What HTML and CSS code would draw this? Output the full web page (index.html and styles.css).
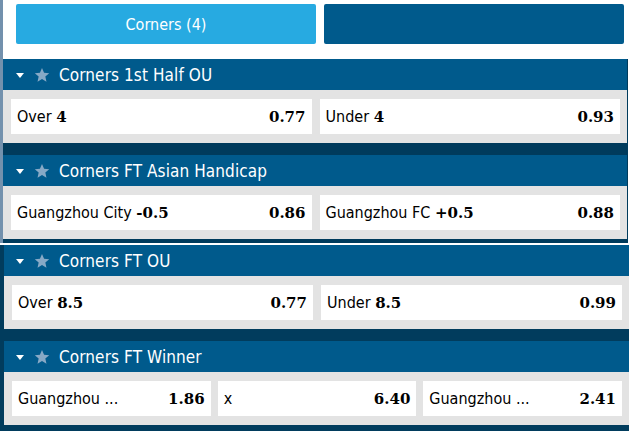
FILE: index.html
```html
<!DOCTYPE html>
<html>
<head>
<meta charset="utf-8">
<link rel="stylesheet" href="styles.css">
</head>
<body>
<div class="top">
  <div class="tabs">
    <div class="tab active">Corners (4)</div>
    <div class="tab"></div>
  </div>
  <div class="group g1">
    <div class="section">
      <div class="head"><span class="caret"></span><svg class="star" viewBox="0 0 24 24"><path d="M12 1.5l3.1 7.1 7.7.7-5.8 5.1 1.7 7.6L12 18l-6.7 4 1.7-7.6-5.8-5.1 7.7-.7z"/></svg><span class="title">Corners 1st Half OU</span></div>
      <div class="body cols2">
        <div class="opt"><span class="lbl">Over <b>4</b></span><b class="odd">0.77</b></div>
        <div class="opt"><span class="lbl">Under <b>4</b></span><b class="odd">0.93</b></div>
      </div>
    </div>
    <div class="section">
      <div class="head"><span class="caret"></span><svg class="star" viewBox="0 0 24 24"><path d="M12 1.5l3.1 7.1 7.7.7-5.8 5.1 1.7 7.6L12 18l-6.7 4 1.7-7.6-5.8-5.1 7.7-.7z"/></svg><span class="title">Corners FT Asian Handicap</span></div>
      <div class="body cols2">
        <div class="opt"><span class="lbl">Guangzhou City <b>-0.5</b></span><b class="odd">0.86</b></div>
        <div class="opt"><span class="lbl">Guangzhou FC <b>+0.5</b></span><b class="odd">0.88</b></div>
      </div>
    </div>
  </div>
</div>
<div class="group g2">
  <div class="section">
    <div class="head"><span class="caret"></span><svg class="star" viewBox="0 0 24 24"><path d="M12 1.5l3.1 7.1 7.7.7-5.8 5.1 1.7 7.6L12 18l-6.7 4 1.7-7.6-5.8-5.1 7.7-.7z"/></svg><span class="title">Corners FT OU</span></div>
    <div class="body cols2">
      <div class="opt"><span class="lbl">Over <b>8.5</b></span><b class="odd">0.77</b></div>
      <div class="opt"><span class="lbl">Under <b>8.5</b></span><b class="odd">0.99</b></div>
    </div>
  </div>
  <div class="section">
    <div class="head"><span class="caret"></span><svg class="star" viewBox="0 0 24 24"><path d="M12 1.5l3.1 7.1 7.7.7-5.8 5.1 1.7 7.6L12 18l-6.7 4 1.7-7.6-5.8-5.1 7.7-.7z"/></svg><span class="title">Corners FT Winner</span></div>
    <div class="body cols3">
      <div class="opt"><span class="lbl">Guangzhou ...</span><b class="odd">1.86</b></div>
      <div class="opt"><span class="lbl">x</span><b class="odd">6.40</b></div>
      <div class="opt"><span class="lbl">Guangzhou ...</span><b class="odd">2.41</b></div>
    </div>
  </div>
</div>
</body>
</html>
```
FILE: styles.css
```css
html, body {
  margin: 0;
  padding: 0;
  background: #ffffff;
  width: 629px;
  height: 431px;
  overflow: hidden;
  font-family: "DejaVu Sans Condensed", "DejaVu Sans", sans-serif;
  font-stretch: condensed;
}
.top {
  border-left: 3px solid #7391ad;
}
.tabs {
  display: flex;
  gap: 8px;
  padding: 4px 5px 15px 13px;
}
.tab {
  flex: 1;
  height: 40px;
  border-radius: 2px;
  background: #005a8c;
  color: #ffffff;
  font-size: 16px;
  display: flex;
  align-items: center;
  justify-content: center;
}
.tab.active {
  background: #27aae1;
}
.group {
  background: #003b5c;
  display: flex;
  flex-direction: column;
  gap: 12px;
}
.g1 {
  border-right: 1px solid #003b5c;
  margin-right: 1px;
  padding-bottom: 4px;
}
.g2 {
  margin-top: 2px;
  padding-left: 4px;
  background: #013c5d;
  height: 186px;
}
.section {
  display: flex;
  flex-direction: column;
}
.head {
  height: 31px;
  background: #005a8c;
  display: flex;
  align-items: center;
  color: #ffffff;
  font-size: 17px;
  letter-spacing: 0.1px;
}
.caret {
  width: 0;
  height: 0;
  border-left: 4px solid transparent;
  border-right: 4px solid transparent;
  border-top: 5px solid #ffffff;
  margin-left: 13px;
  margin-top: 1px;
}
.g2 .caret {
  margin-left: 12px;
}
.star {
  width: 16px;
  height: 16px;
  fill: #87a9c6;
  margin-left: 10px;
}
.title {
  margin-left: 9px;
}
.body {
  background: #e3e3e3;
  padding: 9px 7px 9px 8px;
  display: grid;
  gap: 8px;
}
.cols2 {
  grid-template-columns: 1fr 1fr;
}
.cols3 {
  grid-template-columns: 1fr 1fr 1fr;
  gap: 7px;
}
.opt {
  height: 35px;
  background: #ffffff;
  display: flex;
  align-items: center;
  justify-content: space-between;
  padding: 0 6px;
  font-size: 16px;
  color: #000000;
}
.opt b {
  font-family: "DejaVu Serif", serif;
  font-weight: bold;
  font-size: 15px;
  font-stretch: normal;
}
.odd {
  font-size: 15px;
}
```
